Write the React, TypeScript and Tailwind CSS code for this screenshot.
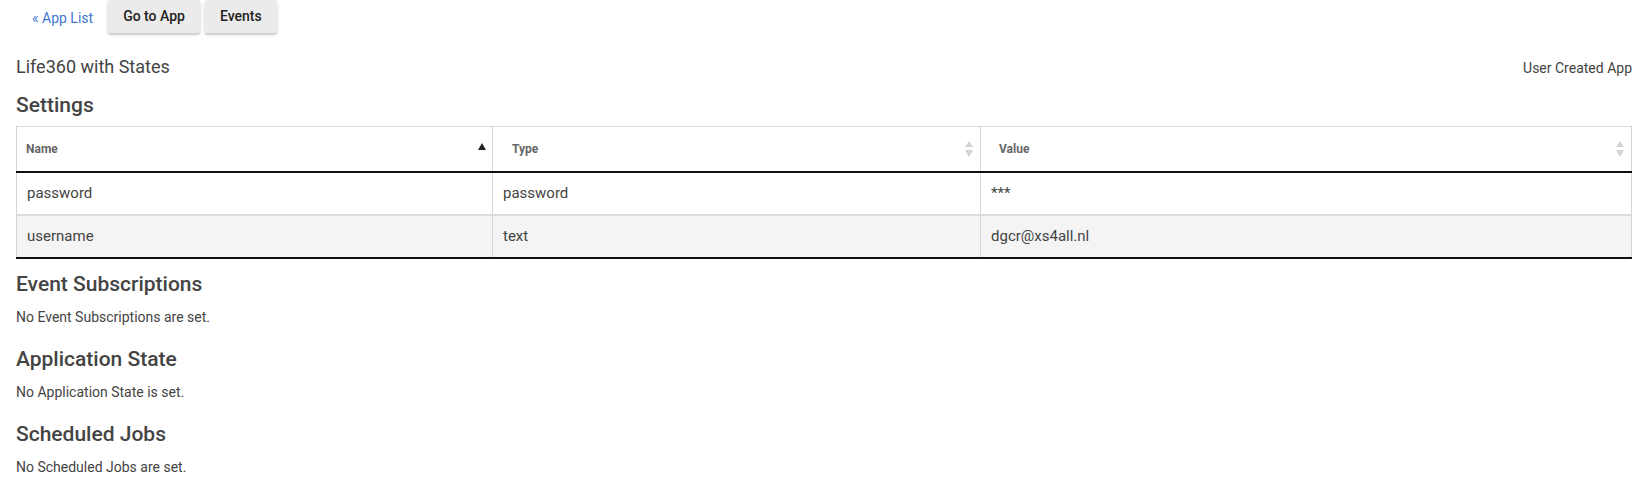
import React from 'react';

const rows = [
  { name: 'password', type: 'password', value: '***' },
  { name: 'username', type: 'text', value: 'dgcr@xs4all.nl' },
];

function SortAsc() {
  return (
    <svg width="8" height="7" viewBox="0 0 8 7" className="block">
      <path d="M4 0 L8 7 L0 7 Z" fill="#222" />
    </svg>
  );
}

function SortBoth() {
  return (
    <svg width="8" height="16" viewBox="0 0 8 16" className="block">
      <path d="M4 0 L8 6 L0 6 Z" fill="#d4d4d4" />
      <path d="M4 16 L8 9 L0 9 Z" fill="#d4d4d4" />
    </svg>
  );
}

function Section({ title, empty }: { title: string; empty: string }) {
  return (
    <div className="mt-5 first:mt-[13px]">
      <h2 className="text-[21px] leading-[25px] font-medium text-[#444]">{title}</h2>
      <p className="mt-[10px] text-[14px] leading-[20px] text-[#444]">{empty}</p>
    </div>
  );
}

export default function App() {
  return (
    <div
      className="min-h-screen bg-white pl-4 pr-[10px]"
      style={{ fontFamily: 'Roboto, "Liberation Sans", Arial, sans-serif' }}
    >
      <div className="flex items-start h-[34px]">
        <a href="#" className="ml-4 mt-[9px] text-[14px] leading-[18px] text-[#3f77cf]">
          « App List
        </a>
        <button
          type="button"
          className="ml-[15px] h-[33px] px-[15px] bg-[#ebebeb] rounded-[2px] text-[14px] font-medium text-[#222] shadow-[0_2px_2px_rgba(0,0,0,0.16),0_1px_4px_rgba(0,0,0,0.1)]"
        >
          Go to App
        </button>
        <button
          type="button"
          className="ml-[5px] h-[33px] px-[15px] bg-[#ebebeb] rounded-[2px] text-[14px] font-medium text-[#222] shadow-[0_2px_2px_rgba(0,0,0,0.16),0_1px_4px_rgba(0,0,0,0.1)]"
        >
          Events
        </button>
      </div>

      <div className="mt-[21px] flex items-baseline justify-between">
        <div className="text-[18px] leading-[24px] text-[#444]">Life360 with States</div>
        <div className="text-[14px] leading-[20px] text-[#444]">User Created App</div>
      </div>

      <h2 className="mt-[14px] text-[21px] leading-[25px] font-medium text-[#444]">Settings</h2>

      <table className="mt-2 w-[1616px] table-fixed border-collapse border-t border-[#dcdcdc]">
        <thead>
          <tr className="h-[45px] border-b-2 border-[#111]">
            <th className="w-[476px] border-l border-r border-[#d4d4d4] text-left font-bold text-[12px] text-[#666] pl-[9px] pr-[6px]">
              <div className="flex items-center justify-between">
                <span>Name</span>
                <span className="-mt-[5px]">
                  <SortAsc />
                </span>
              </div>
            </th>
            <th className="w-[488px] border-r border-[#d4d4d4] text-left font-bold text-[12px] text-[#666] pl-[19px] pr-[7px]">
              <div className="flex items-center justify-between">
                <span>Type</span>
                <SortBoth />
              </div>
            </th>
            <th className="border-r border-[#d4d4d4] text-left font-bold text-[12px] text-[#666] pl-[18px] pr-[7px]">
              <div className="flex items-center justify-between">
                <span>Value</span>
                <SortBoth />
              </div>
            </th>
          </tr>
        </thead>
        <tbody>
          {rows.map((r, i) => (
            <tr
              key={r.name}
              className={`h-[43px] border-t-2 border-[#dddddd] ${i % 2 === 1 ? 'bg-[#f4f4f4]' : 'bg-white'}`}
            >
              <td className="border-l border-r border-[#d4d4d4] pl-[10px] text-[15px] text-[#444]">{r.name}</td>
              <td className="border-r border-[#d4d4d4] pl-[10px] text-[15px] text-[#444]">{r.type}</td>
              <td className="border-r border-[#d4d4d4] pl-[10px] text-[15px] text-[#444]">{r.value}</td>
            </tr>
          ))}
          <tr className="border-t-2 border-[#111]">
            <td colSpan={3} className="p-0 h-0" />
          </tr>
        </tbody>
      </table>

      <div>
        <Section title="Event Subscriptions" empty="No Event Subscriptions are set." />
        <Section title="Application State" empty="No Application State is set." />
        <Section title="Scheduled Jobs" empty="No Scheduled Jobs are set." />
      </div>
    </div>
  );
}
